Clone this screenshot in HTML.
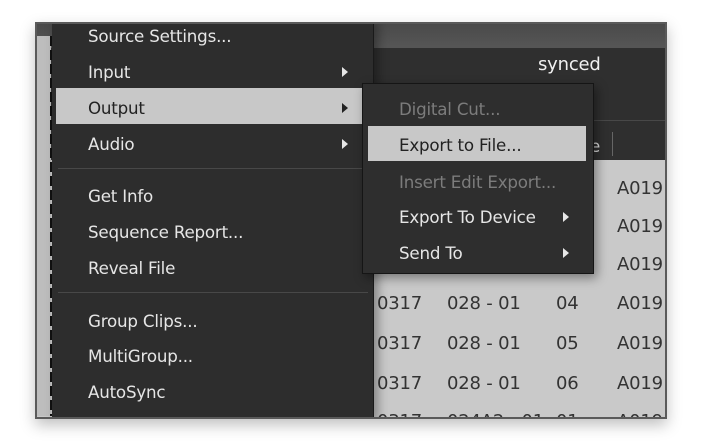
<!DOCTYPE html>
<html><head><style>
*{margin:0;padding:0;box-sizing:border-box}
body{width:702px;height:442px;background:#fff;position:relative;overflow:hidden;font-family:"DejaVu Sans","Liberation Sans",sans-serif;}
.win{position:absolute;left:35px;top:22px;width:632px;height:397px;background:#2f2f2f;border:2px solid #5a5a5a;overflow:hidden;box-shadow:0 6px 14px rgba(0,0,0,.25)}
.abs{position:absolute}
.t{position:absolute;font-size:16.7px;color:#e6e6e6;white-space:nowrap;line-height:20px;letter-spacing:-0.2px}
.g{color:#7c7c7c}
.d{color:#333;font-size:18px!important}
.arr{position:absolute;width:0;height:0;border-top:5px solid transparent;border-bottom:5px solid transparent;border-left:6px solid #e6e6e6}
.arr.k{border-left-color:#222}
</style></head><body>
<div class="win">
  <div class="abs" style="left:0;top:0;width:630px;height:22px;background:linear-gradient(#4a4a4a,#555)"></div>
  <div class="abs" style="left:0;top:22px;width:630px;height:2px;background:#555"></div>
  <div class="abs" style="left:335px;top:96px;width:300px;height:1px;background:#484848"></div>
  <div class="abs" style="left:0;top:136px;width:630px;height:262px;background:#c9c9c9"></div>
  <div class="abs" style="left:0;top:12px;width:14px;height:380px;background:#bdbdbd"></div>
  <div class="abs" style="left:13px;top:12px;width:2px;height:380px;background:repeating-linear-gradient(#111 0 10px,transparent 10px 14px)"></div>
  <div class="abs" style="left:575px;top:108px;width:1px;height:24px;background:#666"></div>
  <div class="t" style="left:553px;top:112px;color:#ddd">e</div>
  <div class="t" style="left:501px;top:31px;color:#f0f0f0;font-size:18px">synced</div>
  <div class="t d" style="left:580px;top:155px">A019</div>
  <div class="t d" style="left:580px;top:193px">A019</div>
  <div class="t d" style="left:580px;top:231px">A019</div>
  <div class="t d" style="left:340px;top:270px">0317</div><div class="t d" style="left:410px;top:270px">028 - 01</div><div class="t d" style="left:519px;top:270px">04</div><div class="t d" style="left:580px;top:270px">A019</div>
  <div class="t d" style="left:340px;top:310px">0317</div><div class="t d" style="left:410px;top:310px">028 - 01</div><div class="t d" style="left:519px;top:310px">05</div><div class="t d" style="left:580px;top:310px">A019</div>
  <div class="t d" style="left:340px;top:350px">0317</div><div class="t d" style="left:410px;top:350px">028 - 01</div><div class="t d" style="left:519px;top:350px">06</div><div class="t d" style="left:580px;top:350px">A019</div>
  <div class="t d" style="left:340px;top:388px">0317</div><div class="t d" style="left:410px;top:388px">024A2 - 01</div><div class="t d" style="left:519px;top:388px">01</div><div class="t d" style="left:580px;top:388px">A019</div>
  <div class="abs" style="left:15px;top:-2px;width:322px;height:400px;background:#2d2d2d;border-right:1px solid #1a1a1a;box-shadow:4px 0 10px rgba(0,0,0,.35)">
    <div class="abs" style="left:4px;top:66px;width:306px;height:36px;background:#c8c8c8"></div>
    <div class="abs" style="left:6px;top:146px;width:306px;height:1px;background:#484848"></div>
    <div class="abs" style="left:6px;top:270px;width:310px;height:1px;background:#484848"></div>
    <div class="t" style="left:36px;top:4px">Source Settings...</div>
    <div class="t" style="left:36px;top:40px">Input</div><div class="arr" style="left:290px;top:45px"></div>
    <div class="t" style="left:36px;top:76px;color:#222">Output</div><div class="arr k" style="left:290px;top:81px"></div>
    <div class="t" style="left:36px;top:112px">Audio</div><div class="arr" style="left:290px;top:117px"></div>
    <div class="t" style="left:36px;top:164px">Get Info</div>
    <div class="t" style="left:36px;top:200px">Sequence Report...</div>
    <div class="t" style="left:36px;top:236px">Reveal File</div>
    <div class="t" style="left:36px;top:289px">Group Clips...</div>
    <div class="t" style="left:36px;top:324px">MultiGroup...</div>
    <div class="t" style="left:36px;top:360px">AutoSync</div>
  </div>
  <div class="abs" style="left:325px;top:59px;width:232px;height:191px;background:#2e2e2e;border:1px solid #151515;box-shadow:3px 4px 10px rgba(0,0,0,.4)">
    <div class="abs" style="left:5px;top:42px;width:218px;height:35px;background:#c8c8c8"></div>
    <div class="t g" style="left:36px;top:15px">Digital Cut...</div>
    <div class="t" style="left:36px;top:51px;color:#222">Export to File...</div>
    <div class="t g" style="left:36px;top:88px">Insert Edit Export...</div>
    <div class="t" style="left:36px;top:123px">Export To Device</div><div class="arr" style="left:200px;top:128px"></div>
    <div class="t" style="left:36px;top:159px">Send To</div><div class="arr" style="left:200px;top:164px"></div>
  </div>
</div>
</body></html>
